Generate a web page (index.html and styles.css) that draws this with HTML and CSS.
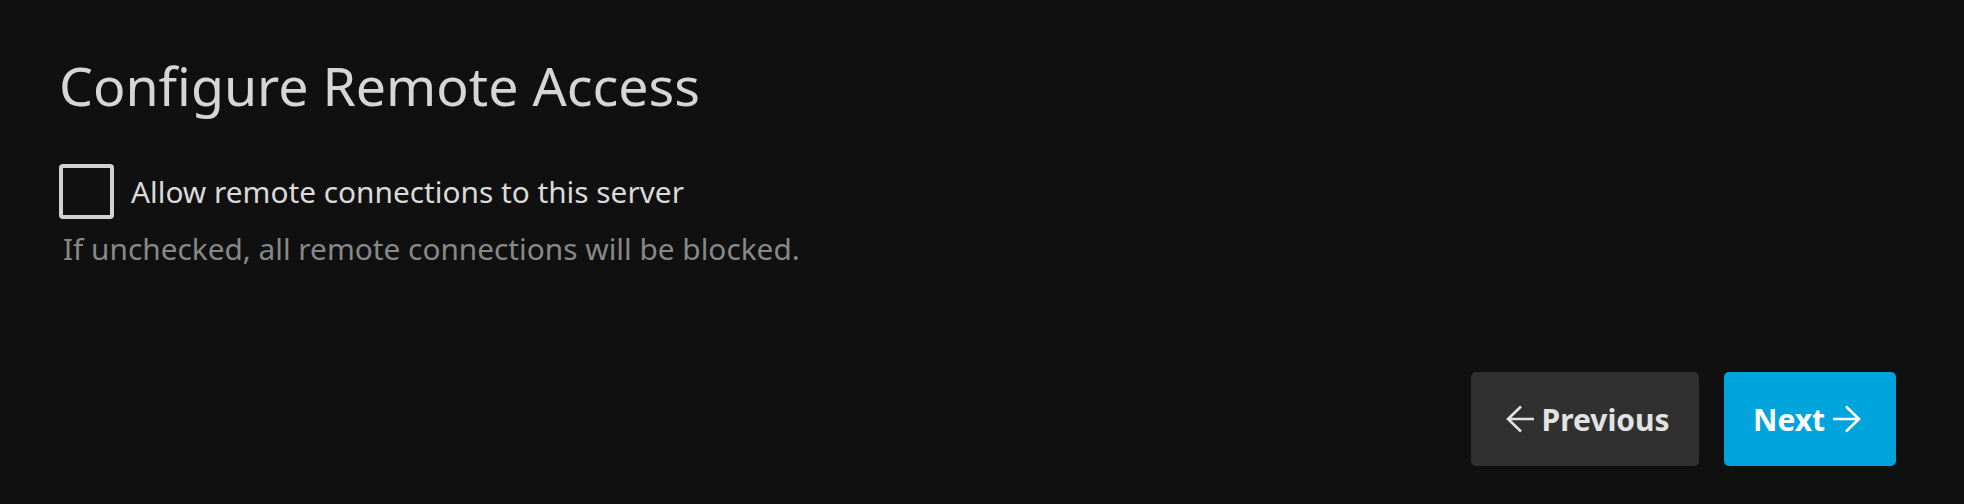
FILE: index.html
```html
<!DOCTYPE html>
<html lang="en">
<head>
<meta charset="utf-8">
<title>Configure Remote Access</title>
<link rel="stylesheet" href="styles.css">
</head>
<body>
<div class="page">
  <h1 class="title">Configure Remote Access</h1>
  <label class="check-row">
    <input type="checkbox" class="check-input">
    <span class="check-box"></span>
    <span class="check-label">Allow remote connections to this server</span>
  </label>
  <div class="field-desc">If unchecked, all remote connections will be blocked.</div>
  <div class="actions">
    <button class="btn btn-prev" type="button">
      <svg class="btn-icon" viewBox="0 0 30 28" aria-hidden="true"><path d="M29 14H3M16 1.5L3 14l13 12.5" fill="none" stroke="currentColor" stroke-width="2.6" stroke-linecap="butt" stroke-linejoin="miter"/></svg>
      <span>Previous</span>
    </button>
    <button class="btn btn-next" type="button">
      <span>Next</span>
      <svg class="btn-icon" viewBox="0 0 30 28" aria-hidden="true"><path d="M1 14h26M14 1.5L27 14 14 26.5" fill="none" stroke="currentColor" stroke-width="2.6" stroke-linecap="butt" stroke-linejoin="miter"/></svg>
    </button>
  </div>
</div>
</body>
</html>
```

FILE: styles.css
```css
html, body {
  margin: 0;
  padding: 0;
  background: #101010;
}
body {
  font-family: "Noto Sans", "Open Sans", sans-serif;
  color: #d8d8d8;
}
.page {
  box-sizing: border-box;
  height: 504px;
  display: flex;
  flex-direction: column;
  padding: 0 68px 38px 59px;
}
.title {
  margin: 49px 0 0 0;
  font-size: 53.7px;
  font-weight: 400;
  line-height: normal;
  color: #d6d6d6;
}
.check-row {
  margin-top: 42px;
  display: flex;
  align-items: center;
  gap: 17px;
  cursor: pointer;
}
.check-input {
  display: none;
}
.check-box {
  box-sizing: border-box;
  width: 55px;
  height: 55px;
  border: 4px solid #d2d2d2;
  border-radius: 4px;
  flex: none;
}
.check-label {
  font-size: 29.8px;
  line-height: normal;
  color: #dadada;
}
.field-desc {
  margin-top: 9px;
  padding-left: 4px;
  font-size: 29.8px;
  line-height: normal;
  color: #888888;
}
.actions {
  margin-top: auto;
  display: flex;
  justify-content: flex-end;
  gap: 25px;
}
.btn {
  box-sizing: border-box;
  height: 94px;
  display: flex;
  align-items: center;
  gap: 7px;
  border: 0;
  border-radius: 5px;
  font-family: "Noto Sans", "Open Sans", sans-serif;
  font-size: 30px;
  font-weight: 700;
  cursor: pointer;
}
.btn-prev {
  width: 228px;
  padding: 0 0 0 33.5px;
  background: #303030;
  color: #e2e2e2;
}
.btn-next {
  width: 172px;
  padding: 0 0 0 29px;
  background: #00a4dc;
  color: #ffffff;
}
.btn-icon {
  width: 30px;
  height: 28px;
  flex: none;
}
```
